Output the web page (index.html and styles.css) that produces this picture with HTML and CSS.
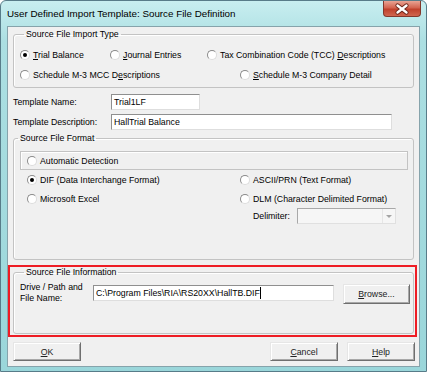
FILE: index.html
```html
<!DOCTYPE html>
<html>
<head>
<meta charset="utf-8">
<title>Source File Definition</title>
<link rel="stylesheet" href="styles.css">
</head>
<body>
<div class="window">
  <div class="titlebar">
    <span class="title">User Defined Import Template: Source File Definition</span>
    <div class="close">
      <svg width="38" height="16" viewBox="0 0 38 16">
        <path d="M14.5 4.5 L23.5 11.5 M23.5 4.5 L14.5 11.5" stroke="#6b2418" stroke-width="4.2" stroke-linecap="round" fill="none"/>
        <path d="M14.5 4.5 L23.5 11.5 M23.5 4.5 L14.5 11.5" stroke="#fff" stroke-width="2.4" stroke-linecap="round" fill="none"/>
      </svg>
    </div>
  </div>

  <div class="client">
    <fieldset class="group import-type">
      <legend>Source File Import Type</legend>
      <div class="row">
        <div class="opt w-trial"><span class="radio on"></span><span><u>T</u>rial Balance</span></div>
        <div class="opt w-journal"><span class="radio"></span><span><u>J</u>ournal Entries</span></div>
        <div class="opt"><span class="radio"></span><span>Tax Combination Code (TCC) <u>D</u>escriptions</span></div>
      </div>
      <div class="row">
        <div class="opt w-mcc"><span class="radio"></span><span>Schedule M-3 MCC D<u>e</u>scriptions</span></div>
        <div class="opt"><span class="radio"></span><span><u>S</u>chedule M-3 Company Detail</span></div>
      </div>
    </fieldset>

    <div class="field first">
      <span class="field-label">Template Name:</span>
      <div class="edit name">Trial1LF</div>
    </div>
    <div class="field">
      <span class="field-label">Template Description:</span>
      <div class="edit desc">HallTrial Balance</div>
    </div>

    <fieldset class="group format">
      <legend>Source File Format</legend>
      <div class="auto-box">
        <div class="opt"><span class="radio"></span><span>Automatic Detection</span></div>
      </div>
      <div class="format-grid">
        <div class="opt"><span class="radio on"></span><span>DIF (Data Interchange Format)</span></div>
        <div class="opt"><span class="radio"></span><span>ASCII/PRN (Text Format)</span></div>
        <div class="opt"><span class="radio"></span><span>Microsoft Excel</span></div>
        <div class="opt"><span class="radio"></span><span>DLM (Character Delimited Format)</span></div>
        <div></div>
        <div class="delim">
          <span class="delim-label">Delimiter:</span>
          <div class="combo"><span class="arrow"></span></div>
        </div>
      </div>
    </fieldset>

    <div class="highlight">
      <fieldset class="group info">
        <legend>Source File Information</legend>
        <div class="info-row">
          <span class="path-label">Drive / Path and<br>File Name:</span>
          <div class="edit path"><span>C:\Program Files\RIA\RS20XX\HallTB.DIF</span><span class="caret"></span></div>
          <div class="btn browse"><span><u>B</u>rowse...</span></div>
        </div>
      </fieldset>
    </div>

    <div class="buttons">
      <div class="btn"><span><u>O</u>K</span></div>
      <div class="btn cancel"><span><u>C</u>ancel</span></div>
      <div class="btn help"><span><u>H</u>elp</span></div>
    </div>
  </div>
</div>
</body>
</html>
```

FILE: styles.css
```css
body { margin: 0; background: #fff; font: 8.75px "Liberation Sans", Arial, sans-serif; color: #000; }

.window { width: 427px; height: 372px; box-sizing: border-box; border: 1px solid #587c89; border-radius: 6px 6px 0 0; background: linear-gradient(#c8eef0, #acdfe2 40px, #9ad6da); display: flex; flex-direction: column; }

.titlebar { height: 25px; flex: none; display: flex; align-items: center; }
.title { padding-left: 6px; font-size: 9.8px; }
.close { align-self: flex-start; margin-left: auto; margin-right: 5px; width: 38px; height: 16px; box-sizing: border-box; border: 1px solid #83372b; border-top: 0; border-radius: 0 0 4px 4px; background: linear-gradient(#e9a494, #d36450 45%, #c0412c 55%, #d0664f); }
.close svg { display: block; margin-left: -1px; }

.client { flex: 1; margin: 0 6px 4px; border: 1px solid #86a3ab; background: #f0f0f0; padding-top: 2px; }

.group { margin: 0 0 0 5px; width: 401px; box-sizing: border-box; border: 1px solid #c3c3c3; border-radius: 3px; box-shadow: inset 1px 1px 0 #fff; min-inline-size: 0; }
.group legend { margin-left: 4px; padding: 0 2px; line-height: 11px; }

.opt { display: flex; align-items: center; height: 20px; white-space: nowrap; }
.radio { width: 10px; height: 10px; box-sizing: border-box; margin-right: 3px; border-radius: 50%; border: 1px solid; border-color: #8a8a8a #dcdcdc #dcdcdc #8a8a8a; background: #fff; position: relative; flex: none; }
.radio.on::after { content: ""; position: absolute; left: 2px; top: 2px; width: 4px; height: 4px; border-radius: 50%; background: #000; }

.import-type { padding: 5px 0 2px 6px; }
.row { display: flex; }
.w-trial { width: 90px; }
.w-journal { width: 97px; }
.w-mcc { width: 220px; }

.field { display: flex; align-items: center; margin: 4px 0 0 5px; }
.field.first { margin-top: 6px; }
.field-label { width: 98px; }
.edit { height: 16px; box-sizing: border-box; border: 1px solid; border-color: #8f8f8f #dedede #dedede #8f8f8f; background: #fff; padding-left: 2px; line-height: 14px; white-space: nowrap; }
.edit.name { width: 89px; }
.edit.desc { width: 281px; }

.format { margin-top: 3px; padding: 7px 0 32px; }
.auto-box { margin: 0 5px 0 6px; height: 19px; box-sizing: border-box; border: 1px solid #c3c3c3; box-shadow: inset 1px 1px 0 #fff; padding-left: 6px; }
.auto-box .opt { height: 17px; }
.format-grid { display: grid; grid-template-columns: 213px auto; grid-auto-rows: 19px; padding-left: 13px; }
.delim { display: flex; align-items: center; padding-left: 13px; height: 16px; }
.delim-label { width: 44px; }
.combo { width: 99px; height: 16px; box-sizing: border-box; border: 1px solid; border-color: #a8a8a8 #e0e0e0 #e0e0e0 #a8a8a8; background: #f6f6f6; display: flex; justify-content: flex-end; }
.arrow { width: 12px; border-left: 1px solid #e6e6e6; position: relative; }
.arrow::after { content: ""; position: absolute; left: 3px; top: 6px; border: 3px solid transparent; border-top: 3px solid #a4a4a4; border-bottom: 0; }

.highlight { margin-top: 5px; width: 409px; box-sizing: border-box; border: 2px solid #ee1c24; padding-bottom: 1px; }
.info { margin-left: 3px; padding: 4px 0 29px 6px; }
.info-row { display: flex; align-items: flex-start; }
.path-label { width: 73px; line-height: 11px; }
.edit.path { width: 241px; margin-top: 3px; display: flex; align-items: center; }
.caret { width: 1px; height: 12px; background: #000; }

.btn { width: 68px; height: 19px; box-sizing: border-box; border: 1px solid; border-color: #e6e6e6 #6f6f6f #6f6f6f #e6e6e6; box-shadow: inset 1px 1px 0 #fff, inset -1px -1px 0 #a8a8a8; background: #f0f0f0; display: flex; align-items: center; justify-content: center; color: #222; }
.browse { width: 67px; height: 20px; margin: 2px 0 0 9px; }

.buttons { display: flex; gap: 9px; margin-top: 5px; padding: 0 4px 0 5px; }
.cancel { margin-left: auto; }
```
